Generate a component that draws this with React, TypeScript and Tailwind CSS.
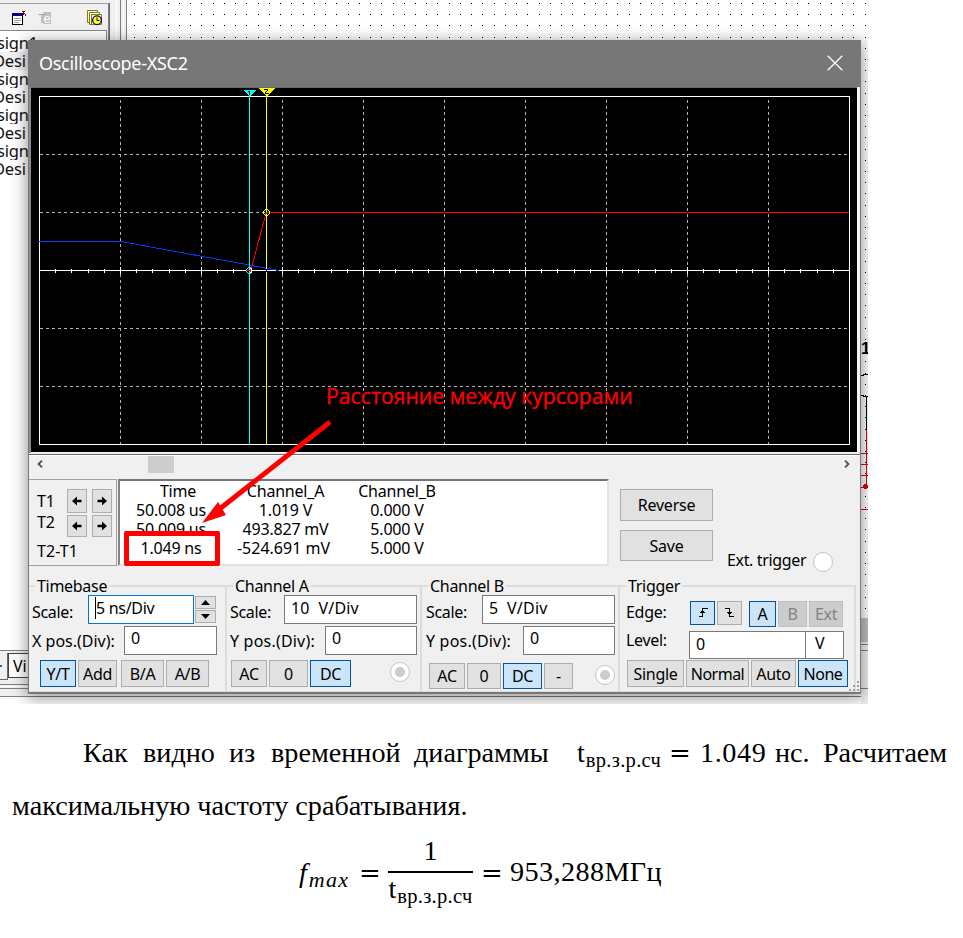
import type { ReactNode } from "react";

const range = (n: number) => Array.from({ length: n }, (_, i) => i);

function Btn({ children, className = "", on = false, off = false }: { children?: ReactNode; className?: string; on?: boolean; off?: boolean }) {
  const tone = on
    ? "border-[#00539c] bg-[#cce4f7] text-black"
    : off
      ? "border-[#bfbfbf] bg-[#cccccc] text-[#838383]"
      : "border-[#adadad] bg-[#e1e1e1] text-black";
  return <button className={`flex shrink-0 items-center justify-center border ${tone} ${className}`}>{children}</button>;
}

function Field({ children, className = "" }: { children?: ReactNode; className?: string }) {
  return <div className={`shrink-0 border bg-white ${className}`}>{children}</div>;
}

function Radio({ className = "", dot = true }: { className?: string; dot?: boolean }) {
  return (
    <div className={`flex size-5 shrink-0 items-center justify-center rounded-full border border-[#c4c4c4] bg-white ${className}`}>
      {dot && <div className="size-2.5 rounded-full bg-[#cccccc]" />}
    </div>
  );
}

function Arrow({ left = false }: { left?: boolean }) {
  return (
    <svg width="10" height="10" viewBox="0 0 10 10" className={left ? "" : "-scale-x-100"}>
      <path d="M0 5L5 0.6V3.8H9.5V6.2H5V9.4Z" fill="#000" />
    </svg>
  );
}

function Desktop() {
  const dotsX = range(66).map((i) => Math.round(134 + i * 11.24));
  const dotsY = range(56).map((i) => Math.round(3 + i * 11.2));
  return (
    <>
      <svg className="absolute inset-0" width="868" height="704" shapeRendering="crispEdges">
        <rect width="868" height="704" fill="#fff" />
        {dotsY.map((y) => dotsX.map((x) => (y < 40 || x > 860) && <rect key={`${x}-${y}`} x={x} y={y} width="1" height="1" fill="#000" />))}
        <rect width="127" height="30" fill="#f0f0f0" />
        <rect x="107" width="20" height="45" fill="#f0f0f0" />
        <path d="M0 3.5H109" stroke="#a0a0a0" />
        <path d="M109.5 3V45" stroke="#696969" />
        <path d="M108.5 4V45M120.5 0V45M126.5 0V45" stroke="#808080" />
        <path d="M116.5 0V45M123.5 0V45" stroke="#fff" />
        <path d="M0 30.5H106.5V45" stroke="#828790" fill="none" />
        <rect y="52" width="28" height="18" fill="#f0f0f0" />
        <rect x="12" y="13" width="11" height="12" fill="#fff" />
        <path d="M12.5 13.5H22.5V24.5H12.5Z" stroke="#000" fill="none" />
        <rect x="12" y="13" width="11" height="3" fill="#000080" />
        <path d="M14 18.5H21M14 20.5H21M14 22.5H19" stroke="#a0a0a0" />
        <path d="M22 11.5H25M23.5 12V15M24 13.5H25M25.5 14V16" stroke="#800000" />
        <rect x="43" y="12" width="8" height="12" fill="#c0c0c0" />
        <rect y="650" width="28" height="47" fill="#f0f0f0" />
        <path d="M0 650.5H28M0 684.5H28M0 688.5H28M0 696.5H868" stroke="#808080" />
        <path d="M0 686.5H28" stroke="#fff" />
        <path d="M0 679.5H7.5V653" stroke="#696969" fill="none" />
        <path d="M28 653.5H8.5V677.5H28" stroke="#444" fill="#fff" />
        <rect y="665" width="2" height="2" fill="#2563ad" />
        <rect x="861" y="618" width="7" height="24" fill="#c0c0c0" />
        <rect x="861" y="642" width="7" height="62" fill="#f0f0f0" />
        <path d="M861 644.5H868M861 650.5H868M861 688.5H868" stroke="#808080" />
        <path d="M861 375.5H863V374.5H868M861 395.5H863V396.5H868M866.5 396V430" stroke="#000" fill="none" />
        <path d="M866.5 430V487M861 453.5H868M861 464.5H868M861 475.5H868M861 487.5H868M861 509.5H868" stroke="#e80000" fill="none" />
        <circle cx="865.5" cy="486.5" r="2.5" fill="#e80000" />
      </svg>
      <svg className="absolute left-[86px] top-[9px]" width="17" height="17" viewBox="0 0 17 17">
        <g fill="#fff" stroke="#808000">
          <path d="M1.5 1.5H11.5V13.5H1.5Z" />
          <path d="M3.5 3.5H13.5V15.5H3.5Z" />
          <path d="M5.5 5.5H15.5V15.5H5.5Z" />
        </g>
        <circle cx="11" cy="11.3" r="4.4" fill="#ff0" stroke="#0000a0" strokeWidth="1.3" />
        <path d="M11 8.5V11.5H13.5" stroke="#000" fill="none" />
      </svg>
      <span className="absolute left-[38px] top-[12px] font-['Liberation_Sans',sans-serif] text-[13px] leading-[13px] tracking-[-1px] text-[#a8a8a8]">
        T<span className="text-white">e</span>
      </span>
      <div className="absolute left-[-3px] top-[34px] flex w-[41px] flex-col font-['Noto_Sans',sans-serif] text-[16.5px] leading-[18px] tracking-[-0.2px] text-[#111]">
        {["sign1", "Desi", "sign", "Desi", "sign", "Desi", "sign", "Desi"].map((s, i) => (
          <span key={i} className={`h-[18px] overflow-hidden whitespace-nowrap ${i % 2 ? "-ml-[4px]" : ""}`}>{s}</span>
        ))}
      </div>
      <span className="absolute left-[13px] top-[656px] font-['Noto_Sans',sans-serif] text-[16px] leading-[20px]">Vi</span>
      <span className="absolute left-[861px] top-[339px] font-['Liberation_Sans',sans-serif] text-[17px] font-bold leading-[20px]">1</span>
    </>
  );
}

function Plot() {
  return (
    <svg width="831" height="368" viewBox="29 87 831 368" shapeRendering="crispEdges" className="block">
      <rect x="29" y="87" width="831" height="368" fill="#f0f0f0" />
      <rect x="29" y="87" width="829" height="1" fill="#696969" />
      <rect x="29" y="86" width="2" height="367" fill="#8c8c8c" />
      <rect x="31" y="88" width="826" height="364" fill="#000" />
      <rect x="857" y="87" width="2" height="367" fill="#f4f4f4" />
      <rect x="29" y="454" width="831" height="1" fill="#696969" />
      <path d="M39.5 96.5H849.5V444.5H39.5Z" stroke="#fff" fill="none" />
      <g stroke="#b4b4b4" strokeDasharray="3 3">
        {[120, 201, 282, 363, 444, 525, 606, 687, 768].map((x) => <path key={x} d={`M${x + 0.5} 100V444`} />)}
        {[154, 212, 328, 386].map((y) => <path key={y} d={`M40 ${y + 0.5}H847`} />)}
      </g>
      <path d="M39 270.5H849" stroke="#fff" />
      {range(49).map((i) => {
        const x = Math.round(39 + (i + 1) * 16.2);
        const major = (i + 1) % 5 === 0;
        return <rect key={i} x={x} y={major ? 267 : 269} width="1" height={major ? 7 : 4} fill="#fff" />;
      })}
      <path d="M39 241.5H121L279 270.5" stroke="#0038ff" fill="none" />
      <path d="M249.5 94V444" stroke="#00ffff" />
      <path d="M266.5 94V444" stroke="#ffff00" />
      <path d="M251 270L266 213M267 212.5H849" stroke="#ff0000" fill="none" />
      <path d="M243 90H256L250 96H249Z" fill="#00ffff" />
      <path d="M258 88H275L267 96H266Z" fill="#ffff00" />
      <path d="M248 91.5H250M249.5 92V95" stroke="#000" />
      <path d="M264 89.5H268M267.5 90V91M266 91.5H267M265.5 92V93M265 93.5H269" stroke="#000" fill="none" />
      <path d="M265 209.5H268M264.5 210V211M268.5 210V211M263.5 211V214M269.5 211V214M264.5 214V215M268.5 214V215M265 215.5H268" stroke="#ffff00" />
      <path d="M248 267.5H251M247.5 268V269M246.5 269V272M247.5 272V273M248 273.5H251" stroke="#00ffff" />
      <rect x="246" y="270" width="4" height="1" fill="#f00" />
      <rect x="248" y="269" width="1" height="1" fill="#f00" />
      <rect x="250" y="268" width="2" height="5" fill="#fff" />
      <rect x="250" y="269" width="1" height="3" fill="#f00" />
      <rect x="266" y="212" width="1" height="2" fill="#0c0" />
      <rect x="266" y="269" width="1" height="3" fill="#00f" />
    </svg>
  );
}

function Group({ title, className = "", children }: { title: string; className?: string; children: ReactNode }) {
  return (
    <fieldset className={`mt-[10px] h-[115px] shrink-0 border-b border-r-2 border-t-2 border-[#dcdcdc] ${className}`}>
      <legend className="ml-[6px] h-[18px] px-[2px]">{title}</legend>
      {children}
    </fieldset>
  );
}

function Oscilloscope() {
  return (
    <section className="absolute left-[28px] top-[40px] flex h-[654px] w-[833px] flex-col border-x border-b-2 border-[#777] bg-[#f0f0f0] font-['Noto_Sans',sans-serif] text-[16px] leading-[19px] tracking-[-0.2px] text-black shadow-[0_3px_14px_2px_rgba(0,0,0,0.38)]">
      <header className="flex h-[47px] shrink-0 items-center justify-between bg-[#777] pl-[10px] pr-[17px] text-[18px] tracking-[-0.28px] text-white">
        <span>Oscilloscope-XSC2</span>
        <svg width="16" height="16" viewBox="0 0 16 16" className="-mt-[2px]"><path d="M.7.7L15.3 15.3M15.3.7L.7 15.3" stroke="#fff" strokeWidth="1.3" /></svg>
      </header>
      <Plot />
      <div className="flex h-[24px] shrink-0 border-t border-white pl-[8px] pr-[10px]">
        <svg width="6" height="8" viewBox="0 0 6 8" className="mt-[4px]"><path d="M5 .7L1.5 4L5 7.3" stroke="#505050" strokeWidth="1.8" fill="none" /></svg>
        <div className="ml-[105px] h-[17px] w-[26px] bg-[#cdcdcd]" />
        <svg width="6" height="8" viewBox="0 0 6 8" className="ml-auto mt-[4px]"><path d="M1 .7L4.5 4L1 7.3" stroke="#505050" strokeWidth="1.8" fill="none" /></svg>
      </div>
      <div className="flex h-[88px] shrink-0">
        <div className="mb-px flex w-[88px] border border-l-0 border-[#a0a0a0] pl-[8px] pt-[9px]">
          <div className="flex w-[30px] flex-col whitespace-nowrap">
            <span className="mt-[3px] h-[21px]">T1</span>
            <span className="h-[29px]">T2</span>
            <span className="tracking-[0.1px]">T2-T1</span>
          </div>
          <div className="grid h-[48px] grid-cols-2 gap-x-[5px] gap-y-[2px]">
            <Btn className="h-[24px] w-[20px]"><Arrow left /></Btn>
            <Btn className="h-[24px] w-[20px]"><Arrow /></Btn>
            <Btn className="h-[22px] w-[20px]"><Arrow left /></Btn>
            <Btn className="h-[22px] w-[20px]"><Arrow /></Btn>
          </div>
        </div>
        <div className="mb-px ml-[1px] grid w-[491px] grid-cols-[102px_127px_96px] grid-rows-[19px_19px_19px_19px] border-2 border-b-[#e3e3e3] border-l-[#828282] border-r-[#e3e3e3] border-t-[#757575] bg-white pt-px text-center">
          <span className="pl-[14px]">Time</span><span>Channel_A</span><span>Channel_B</span>
          <span>50.008 us</span><span>1.019 V</span><span>0.000 V</span>
          <span>50.009 us</span><span>493.827 mV</span><span>5.000 V</span>
          <span>1.049 ns</span><span className="pr-[4px] tracking-[0px]">-524.691 mV</span><span>5.000 V</span>
        </div>
        <div className="ml-[11px] flex w-[93px] flex-col gap-[9px] pt-[10px]">
          <Btn className="h-[32px]">Reverse</Btn>
          <Btn className="h-[31px] pt-[2px]">Save</Btn>
        </div>
        <div className="ml-[14px] flex pt-[73px]">
          <span className="-mt-px h-[19px] w-[86px] whitespace-nowrap tracking-[-0.35px]">Ext. trigger</span>
          <Radio dot={false} />
        </div>
      </div>
      <div className="flex h-[125px] shrink-0">
        <Group title="Timebase" className="w-[198px] tracking-[-0.3px]">
          <div className="flex h-[29px] pl-[3px]">
            <span className="w-[56px] pt-[8px]">Scale:</span>
            <Field className="h-[29px] w-[106px] border-[#0078d7] pl-[6px] pt-[3px]"><span className="border-l border-black">5 ns/Div</span></Field>
            <div className="ml-[1px] flex w-[21px] flex-col gap-[1px] pt-[1px]">
              <Btn className="h-[13px]"><svg width="9" height="5"><path d="M0 5L4.5 0L9 5Z" /></svg></Btn>
              <Btn className="h-[13px]"><svg width="9" height="5"><path d="M0 0L4.5 5L9 0Z" /></svg></Btn>
            </div>
          </div>
          <div className="mt-[2px] flex h-[29px] pl-[3px]">
            <span className="w-[92px] whitespace-nowrap pt-[6px] tracking-[0px]">X pos.(Div):</span>
            <Field className="h-[29px] w-[93px] border-[#7a7a7a] pl-[6px] pt-[2px]">0</Field>
          </div>
          <div className="mt-[5px] flex h-[27px] gap-[2px] pl-[11px]">
            <Btn on className="w-[36px] pt-px">Y/T</Btn>
            <Btn className="w-[39px] pt-px">Add</Btn>
            <Btn className="ml-[2px] w-[43px] pt-px">B/A</Btn>
            <Btn className="w-[43px] pt-px">A/B</Btn>
          </div>
        </Group>
        <Group title="Channel A" className="w-[195px] tracking-[-0.3px]">
          <div className="flex h-[29px] pl-[3px]">
            <span className="w-[54px] pt-[8px]">Scale:</span>
            <Field className="h-[29px] w-[133px] whitespace-pre border-[#7a7a7a] pl-[6px] pt-[3px] tracking-[0.2px]">10  V/Div</Field>
          </div>
          <div className="mt-[2px] flex h-[29px] pl-[3px]">
            <span className="w-[95px] whitespace-nowrap pt-[6px] tracking-[0.2px]">Y pos.(Div):</span>
            <Field className="h-[29px] w-[92px] border-[#7a7a7a] pl-[6px] pt-[2px]">0</Field>
          </div>
          <div className="mt-[5px] flex h-[27px] gap-[2px] pl-[4px]">
            <Btn className="w-[36px] pt-px">AC</Btn>
            <Btn className="w-[39px] pt-px">0</Btn>
            <Btn on className="w-[41px] pt-px">DC</Btn>
            <Radio className="ml-[37px] mt-[2px]" />
          </div>
        </Group>
        <Group title="Channel B" className="w-[198px] tracking-[-0.3px]">
          <div className="flex h-[29px] pl-[4px]">
            <span className="w-[56px] pt-[8px]">Scale:</span>
            <Field className="h-[29px] w-[133px] whitespace-pre border-[#7a7a7a] pl-[6px] pt-[3px] tracking-[0.2px]">5  V/Div</Field>
          </div>
          <div className="mt-[2px] flex h-[29px] pl-[4px]">
            <span className="w-[97px] whitespace-nowrap pt-[6px] tracking-[0.2px]">Y pos.(Div):</span>
            <Field className="h-[29px] w-[92px] border-[#7a7a7a] pl-[6px] pt-[2px]">0</Field>
          </div>
          <div className="mt-[8px] flex h-[26px] gap-[2px] pl-[7px]">
            <Btn className="w-[36px]">AC</Btn>
            <Btn className="w-[34px]">0</Btn>
            <Btn on className="w-[39px]">DC</Btn>
            <Btn className="w-[29px]">-</Btn>
            <Radio className="ml-[20px] mt-[2px]" />
          </div>
        </Group>
        <Group title="Trigger" className="w-[236px] tracking-[-0.3px]">
          <div className="flex h-[36px] pl-[6px] pt-[6px]">
            <span className="w-[64px] pt-[2px]">Edge:</span>
            <Btn on className="h-[24px] w-[25px]"><svg width="10" height="10" shapeRendering="crispEdges"><path d="M1 8.5H4.5V.5H10M2 4.5H7M3 3.5H6" stroke="#000" fill="none" /></svg></Btn>
            <Btn className="ml-[2px] h-[24px] w-[25px]"><svg width="10" height="10" shapeRendering="crispEdges"><path d="M0 .5H4.5V8.5H9M2 4.5H7M3 5.5H6" stroke="#000" fill="none" /></svg></Btn>
            <Btn on className="ml-[7px] h-[26px] w-[27px]">A</Btn>
            <Btn off className="ml-[2px] h-[26px] w-[29px]">B</Btn>
            <Btn off className="ml-[2px] h-[26px] w-[34px]">Ext</Btn>
          </div>
          <div className="flex h-[28px] pl-[6px]">
            <span className="w-[63px]">Level:</span>
            <Field className="h-[28px] w-[117px] border-[#7a7a7a] pl-[6px] pt-[3px]">0</Field>
            <Field className="-ml-px h-[28px] w-[39px] border-[#7a7a7a] pl-[9px] pt-[2px]">V</Field>
          </div>
          <div className="mt-[1px] flex h-[27px] gap-[2px] pl-[7px]">
            <Btn className="w-[57px] pt-px">Single</Btn>
            <Btn className="w-[63px] pt-px tracking-[-0.5px]">Normal</Btn>
            <Btn className="w-[45px] pt-px">Auto</Btn>
            <Btn on className="w-[50px] pt-px tracking-[-0.5px]">None</Btn>
          </div>
        </Group>
      </div>
      <svg width="11" height="11" className="absolute bottom-0 right-0" fill="#a0a0a0">
        <path d="M8 0h2v2H8zM8 4h2v2H8zM4 4h2v2H4zM8 8h2v2H8zM4 8h2v2H4zM0 8h2v2H0z" />
      </svg>
    </section>
  );
}

function TimeVar() {
  return (
    <span className="inline-flex whitespace-nowrap">
      t<span className="ml-[1px] pt-[7px] text-[20.5px] tracking-[0.3px]">вр.з.р.сч</span>
    </span>
  );
}

function Equals({ className = "" }: { className?: string }) {
  return <span className={`shrink-0 font-['DejaVu_Serif',serif] text-[26px] ${className}`}>=</span>;
}

export default function App() {
  return (
    <main className="h-[938px] w-[963px] overflow-hidden bg-white text-black">
      <div className="relative h-[704px] w-[868px] overflow-hidden">
        <Desktop />
        <Oscilloscope />
        <div className="absolute left-[124px] top-[531px] h-[35px] w-[96px] rounded-[2px] border-[5px] border-[#ff0000]" />
        <svg className="absolute left-[200px] top-[418px]" width="134" height="108" viewBox="200 418 134 108" fill="#ff0000">
          <path d="M330 422L217 511" stroke="#ff0000" strokeWidth="5" />
          <path d="M202 523L218 502L226 515Z" />
        </svg>
        <span className="absolute left-[326px] top-[382px] origin-left scale-x-[0.965] whitespace-nowrap font-['Open_Sans','Noto_Sans',sans-serif] text-[22px] font-medium leading-[26px] text-[#ff0000] [-webkit-text-stroke:0.3px_#ff0000]">Расстояние между курсорами</span>
      </div>
      <article className="font-['Liberation_Serif',serif] text-[28.2px] leading-[32px]">
        <p className="flex h-[53px] whitespace-nowrap pl-[83px] pt-[33px]">
          <span className="w-[60px] shrink-0">Как</span>
          <span className="w-[86px] shrink-0">видно</span>
          <span className="w-[42px] shrink-0">из</span>
          <span className="w-[143px] shrink-0">временной</span>
          <span className="w-[163px] shrink-0">диаграммы</span>
          <span className="w-[92px] shrink-0"><TimeVar /></span>
          <Equals className="w-[31px]" />
          <span className="w-[75px] shrink-0 tracking-[0.6px]">1.049</span>
          <span className="w-[48px] shrink-0">нс.</span>
          <span className="tracking-[-0.1px]">Расчитаем</span>
        </p>
        <p className="pl-[12px] pt-[33px]">максимальную частоту срабатывания.</p>
        <div className="flex h-[100px] items-start whitespace-nowrap pl-[299px] pt-[12px]">
          <span className="flex w-[60px] pt-[23px] italic">f<span className="ml-[2px] pt-[7px] text-[22px] tracking-[1.3px]">max</span></span>
          <Equals className="w-[29px] pt-[23px]" />
          <span className="flex w-[85px] flex-col items-center">
            <span className="h-[37px] pt-px">1</span>
            <span className="h-[2px] w-full bg-black" />
            <TimeVar />
          </span>
          <Equals className="ml-[8px] w-[29px] pt-[23px]" />
          <span className="pt-[22px] tracking-[0.4px]">953,288МГц</span>
        </div>
      </article>
    </main>
  );
}
